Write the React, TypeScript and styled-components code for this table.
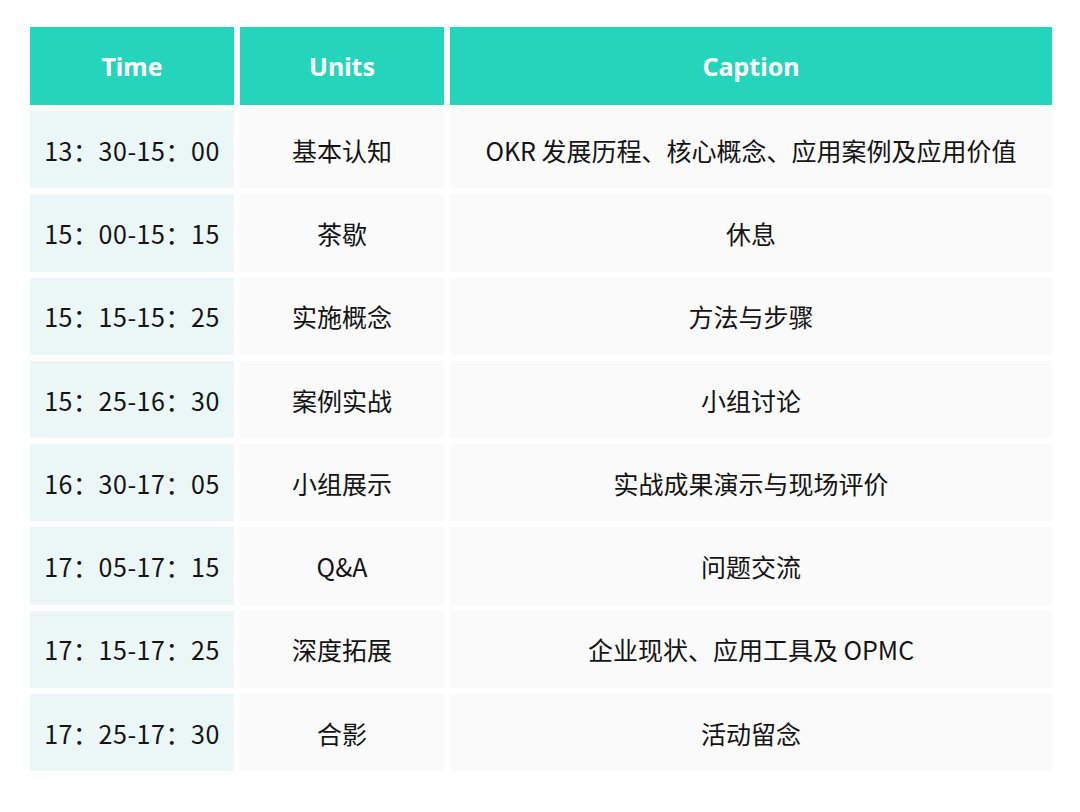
import React from "react";
import styled, { createGlobalStyle } from "styled-components";

const GlobalStyle = createGlobalStyle`
  html, body {
    margin: 0;
    padding: 0;
    background: #ffffff;
  }
  body {
    font-family: "Noto Sans CJK SC", "Noto Sans", sans-serif;
  }
`;

const Page = styled.div`
  width: 1080px;
  height: 812px;
  padding: 27px 28px 0 30px;
  box-sizing: border-box;
`;

const Grid = styled.div`
  display: grid;
  grid-template-columns: 204px 204px 602px;
  grid-template-rows: 78px;
  grid-auto-rows: 77.3px;
  gap: 6px;
`;

const HeadCell = styled.div`
  background: #25d5bb;
  color: #ffffff;
  font-family: "Noto Sans", "Noto Sans CJK SC", sans-serif;
  font-weight: 700;
  font-size: 25px;
  display: flex;
  align-items: center;
  justify-content: center;
`;

const Cell = styled.div<{ $tint?: boolean }>`
  background: ${(p) => (p.$tint ? "#ebf7f6" : "#fafafa")};
  color: #141414;
  font-size: 25px;
  letter-spacing: ${(p) => (p.$tint ? "0.55px" : "0")};
  display: flex;
  align-items: center;
  justify-content: center;
`;

const rows = [
  ["13：30-15：00", "基本认知", "OKR 发展历程、核心概念、应用案例及应用价值"],
  ["15：00-15：15", "茶歇", "休息"],
  ["15：15-15：25", "实施概念", "方法与步骤"],
  ["15：25-16：30", "案例实战", "小组讨论"],
  ["16：30-17：05", "小组展示", "实战成果演示与现场评价"],
  ["17：05-17：15", "Q&A", "问题交流"],
  ["17：15-17：25", "深度拓展", "企业现状、应用工具及 OPMC"],
  ["17：25-17：30", "合影", "活动留念"],
];

export default function App() {
  return (
    <>
      <GlobalStyle />
      <Page>
        <Grid>
          <HeadCell>Time</HeadCell>
          <HeadCell>Units</HeadCell>
          <HeadCell>Caption</HeadCell>
          {rows.map(([time, unit, caption]) => (
            <React.Fragment key={time}>
              <Cell $tint>{time}</Cell>
              <Cell>{unit}</Cell>
              <Cell>{caption}</Cell>
            </React.Fragment>
          ))}
        </Grid>
      </Page>
    </>
  );
}
